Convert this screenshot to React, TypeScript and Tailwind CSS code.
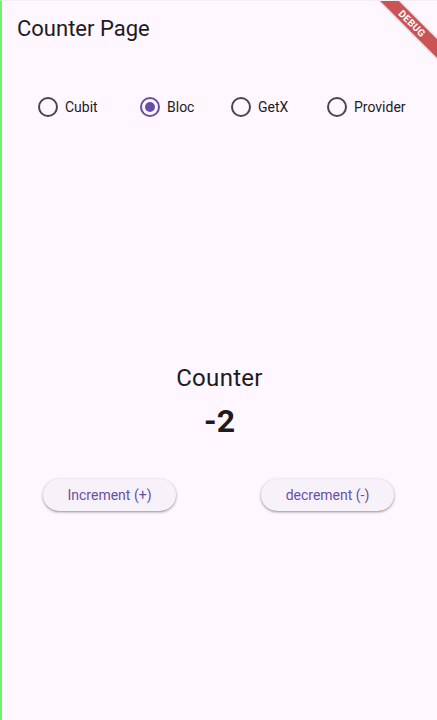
import React, { useState } from 'react';

const options = ['Cubit', 'Bloc', 'GetX', 'Provider'];

const Radio: React.FC<{ selected: boolean }> = ({ selected }) => (
  <span
    className={`w-[20px] h-[20px] rounded-full border-2 flex items-center justify-center ${
      selected ? 'border-[#6750a4]' : 'border-[#49454f]'
    }`}
  >
    {selected && <span className="w-[10px] h-[10px] rounded-full bg-[#6750a4]" />}
  </span>
);

export default function App() {
  const [mode, setMode] = useState('Bloc');
  const [count, setCount] = useState(-2);

  return (
    <div
      className="relative w-[437px] h-[720px] overflow-hidden bg-[#fef7ff] border-l-2 border-[#6ef26e] border-t border-t-[#f3eef5] text-[#1d1b20] flex flex-col"
      style={{ fontFamily: 'Roboto, "Noto Sans", sans-serif' }}
    >
      <header className="h-[56px] flex items-center pl-[15px] shrink-0">
        <h1 className="text-[22px] leading-none text-[#1d1b20]">Counter Page</h1>
      </header>

      <div className="flex items-center pl-[36px] mt-[40px] h-[20px]">
        {options.map((o, i) => (
          <button
            key={o}
            onClick={() => setMode(o)}
            className={`flex items-center gap-[7px] ${
              i === 0 ? 'w-[102px]' : i === 1 ? 'w-[91px]' : i === 2 ? 'w-[96px]' : ''
            }`}
          >
            <Radio selected={mode === o} />
            <span className="text-[14px] text-[#1d1b20]">{o}</span>
          </button>
        ))}
      </div>

      <div className="flex flex-col items-center mt-[247px]">
        <div className="text-[24px] leading-[28px] tracking-[0.3px]">Counter</div>
        <div className="text-[32px] font-bold leading-[40px] mt-[9px]">{count}</div>
      </div>

      <div className="flex justify-between pl-[41px] pr-[43px] mt-[38px]">
        <button
          onClick={() => setCount(count + 1)}
          className="w-[133px] h-[32px] rounded-full bg-[#f7f2fa] text-[#6750a4] text-[14px] shadow-[0_1px_2px_rgba(0,0,0,0.3),0_1px_3px_1px_rgba(0,0,0,0.1)]"
        >
          Increment (+)
        </button>
        <button
          onClick={() => setCount(count - 1)}
          className="w-[133px] h-[32px] rounded-full bg-[#f7f2fa] text-[#6750a4] text-[14px] shadow-[0_1px_2px_rgba(0,0,0,0.3),0_1px_3px_1px_rgba(0,0,0,0.1)]"
        >
          decrement (-)
        </button>
      </div>

      <div className="absolute top-0 right-0 w-[80px] h-[80px] overflow-hidden pointer-events-none">
        <div className="absolute w-[120px] h-[13px] bg-[#b71c1c]/[0.75] text-white text-[10px] font-bold tracking-wide flex items-center justify-center rotate-45 top-[16px] right-[-35px] shadow-[0_0_3px_rgba(0,0,0,0.3)]">
          DEBUG
        </div>
      </div>
    </div>
  );
}
